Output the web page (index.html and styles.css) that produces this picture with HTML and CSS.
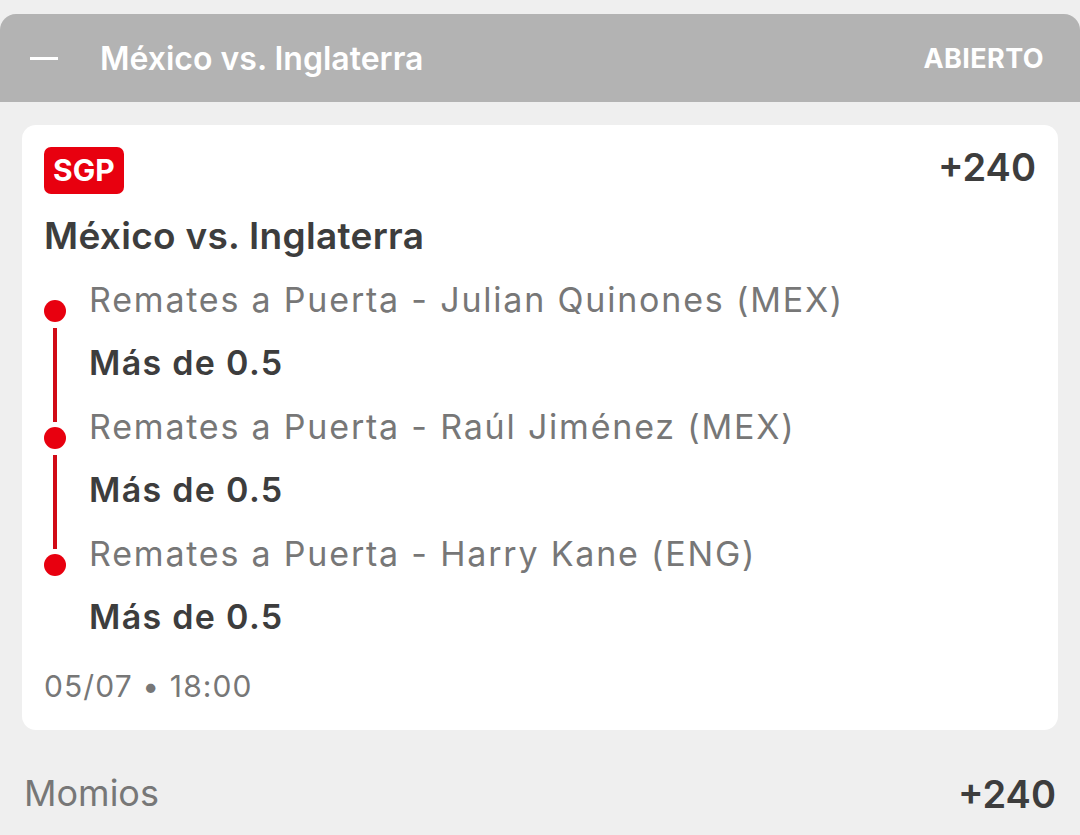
FILE: index.html
```html
<html>
<head>
    <title>México vs. Inglaterra</title>
    <link rel="stylesheet" href="styles.css">
</head>
<body>
    <div class="header">
        <span class="collapse"></span>
        <span class="header-title">México vs. Inglaterra</span>
        <span class="status">ABIERTO</span>
    </div>
    <div class="card">
        <div class="card-top">
            <span class="badge">SGP</span>
            <span class="odds">+240</span>
        </div>
        <div class="match">México vs. Inglaterra</div>
        <div class="legs">
            <div class="leg">
                <div class="leg-name">Remates a Puerta - Julian Quinones (MEX)</div>
                <div class="leg-pick">Más de 0.5</div>
            </div>
            <div class="leg">
                <div class="leg-name">Remates a Puerta - Raúl Jiménez (MEX)</div>
                <div class="leg-pick">Más de 0.5</div>
            </div>
            <div class="leg last">
                <div class="leg-name">Remates a Puerta - Harry Kane (ENG)</div>
                <div class="leg-pick">Más de 0.5</div>
            </div>
        </div>
        <div class="date">05/07 • 18:00</div>
    </div>
    <div class="footer">
        <span class="label">Momios</span>
        <span class="total">+240</span>
    </div>
</body>
</html>
```

FILE: styles.css
```css
body {
    margin: 0;
    padding-top: 14px;
    background-color: #efefef;
    font-family: Inter, Roboto, sans-serif;
    color: #3d3d3d;
}
.header {
    display: flex;
    align-items: center;
    height: 88px;
    background-color: #b3b3b3;
    border-radius: 16px 16px 0 0;
    padding: 0 36px 0 30px;
    color: white;
}
.collapse {
    width: 28px;
    height: 3px;
    background-color: white;
    margin-right: 42px;
}
.header-title {
    font-size: 32px;
    font-weight: 600;
    flex: 1;
}
.status {
    font-size: 27px;
    font-weight: 700;
    letter-spacing: 0.4px;
}
.card {
    background-color: white;
    margin: 23px 22px 0 22px;
    border-radius: 14px;
    padding: 22px 22px 24px 22px;
}
.card-top {
    display: flex;
    justify-content: space-between;
    align-items: flex-start;
}
.badge {
    background-color: #e8000f;
    color: white;
    font-weight: 700;
    font-size: 30px;
    border-radius: 7px;
    padding: 6px 9px;
    line-height: 35px;
}
.odds {
    font-size: 38px;
    font-weight: 600;
    line-height: 40px;
}
.match {
    font-size: 37px;
    font-weight: 600;
    letter-spacing: 0.3px;
    margin-top: 18px;
    line-height: 48px;
}
.legs {
    margin-top: 8px;
}
.leg {
    position: relative;
    padding-left: 45px;
    height: 127px;
}
.leg::before {
    content: "";
    position: absolute;
    left: 0;
    top: 32px;
    width: 22px;
    height: 22px;
    border-radius: 50%;
    background-color: #e8000f;
}
.leg::after {
    content: "";
    position: absolute;
    left: 9px;
    top: 60px;
    width: 4px;
    height: 94px;
    background-color: #d10a16;
}
.leg.last::after {
    display: none;
}
.leg-name {
    font-size: 34px;
    color: #777;
    letter-spacing: 1.8px;
    line-height: 64px;
}
.leg-pick {
    font-size: 34px;
    font-weight: 600;
    letter-spacing: 1.3px;
    line-height: 62px;
}
.date {
    font-size: 30px;
    color: #777;
    letter-spacing: 1.1px;
    margin-top: 17px;
    line-height: 40px;
}
.footer {
    display: flex;
    justify-content: space-between;
    padding: 41px 24px 0 24px;
    font-size: 36px;
}
.label {
    color: #777;
}
.total {
    font-size: 38px;
    font-weight: 600;
}
```
